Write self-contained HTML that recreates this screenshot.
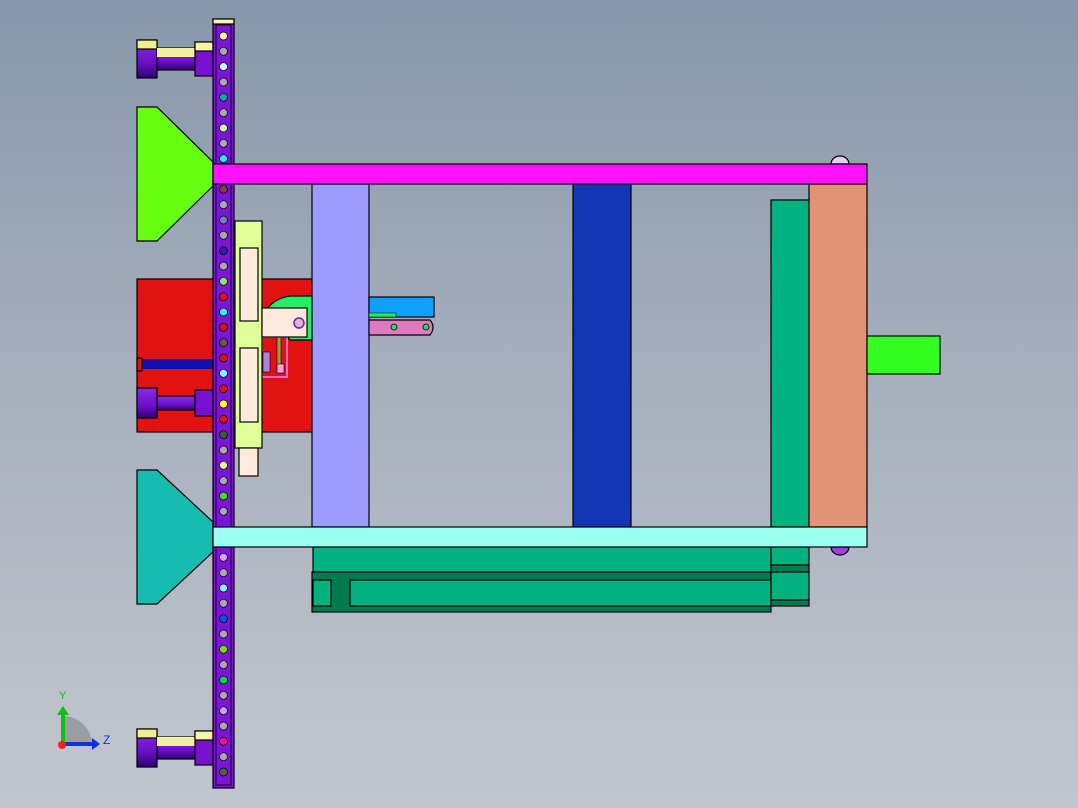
<!DOCTYPE html>
<html><head><meta charset="utf-8"><style>
html,body{margin:0;padding:0;width:1078px;height:808px;overflow:hidden}
body{background:linear-gradient(#8797ab,#a9b1be 50%,#c2c6ce)}
svg{position:absolute;left:0;top:0}
</style></head><body>
<svg width="1078" height="808" viewBox="0 0 1078 808" font-family="Liberation Sans, sans-serif">
<defs>
<linearGradient id="pv" x1="0" y1="0" x2="0" y2="1"><stop offset="0" stop-color="#8a2be2"/><stop offset="0.6" stop-color="#6a10c8"/><stop offset="1" stop-color="#300070"/></linearGradient>
</defs>
<g stroke="#000" stroke-width="1.2">
<rect x="137" y="279" width="175" height="153" fill="#e01212"/>
<rect x="137" y="359" width="76" height="10" fill="#1010b0" stroke="none"/>
<rect x="137" y="358" width="5" height="13" fill="#e01212"/>
<g>
<rect x="137" y="40" width="20" height="38" fill="url(#pv)"/><rect x="137" y="40" width="20" height="9" fill="#eef090"/>
<rect x="157" y="48" width="40" height="22" fill="url(#pv)"/><rect x="157" y="48" width="40" height="9" fill="#f0f0a0" stroke="none"/>
<rect x="195" y="42" width="18" height="34" fill="#7810d0"/><rect x="195" y="42" width="18" height="9" fill="#f8f4a8"/>
</g>
<g>
<rect x="137" y="388" width="20" height="30" fill="url(#pv)"/>
<rect x="157" y="396" width="38" height="14" fill="url(#pv)"/>
<rect x="195" y="390" width="18" height="26" fill="#7810d0"/>
</g>
<g>
<rect x="137" y="729" width="20" height="38" fill="url(#pv)"/><rect x="137" y="729" width="20" height="9" fill="#eef090"/>
<rect x="157" y="737" width="38" height="22" fill="url(#pv)"/><rect x="157" y="737" width="38" height="9" fill="#f0f0a0" stroke="none"/>
<rect x="195" y="731" width="18" height="34" fill="#7810d0"/><rect x="195" y="731" width="18" height="9" fill="#f8f4a8"/>
</g>
<polygon points="137,107 157,107 213,162 213,186 157,241 137,241" fill="#66ff11"/>
<polygon points="137,470 157,470 213,522 213,552 157,604 137,604" fill="#14bdb0"/>
<rect x="313" y="547" width="458" height="25" fill="#00b27f"/>
<rect x="771" y="547" width="38" height="18" fill="#00b27f"/>
<rect x="771" y="565" width="38" height="7" fill="#007a4e"/>
<rect x="312" y="572" width="459" height="40" fill="#007a4e"/>
<rect x="313" y="580" width="18" height="26" fill="#00b27f"/>
<rect x="350" y="580" width="421" height="26" fill="#00b27f"/>
<rect x="771" y="572" width="38" height="28" fill="#00b27f"/>
<rect x="771" y="600" width="38" height="6" fill="#007a4e"/>
<rect x="312" y="184" width="57" height="343" fill="#9c9cff"/>
<rect x="573" y="184" width="58" height="343" fill="#1237b5"/>
<rect x="771" y="200" width="38" height="327" fill="#00b27f"/>
<rect x="809" y="184" width="58" height="343" fill="#e29374"/>
<rect x="867" y="336" width="73" height="38" fill="#33ff22"/>
<path d="M831,164 A9,8 0 0 1 849,164 Z" fill="#e8c8ff"/>
<path d="M831,547 A9,8 0 0 0 849,547 Z" fill="#a040e0"/>
<!-- mechanism -->
<rect x="277" y="305" width="4" height="62" fill="#a0a040" stroke-width="0.6"/>
<path d="M266,310 Q275,298 290,296 L312,296 L312,340 L290,340 Z" fill="#22ee66"/>
<rect x="262" y="337" width="25" height="40" fill="none" stroke="#ff80ff" stroke-width="1.5"/>
<rect x="263" y="352" width="7" height="20" fill="#b080e0" stroke-width="0.6"/>
<rect x="277" y="364" width="7" height="9" fill="#ffa0e0" stroke-width="0.6"/>
<rect x="369" y="297" width="65" height="20" fill="#10a0ff"/>
<rect x="369" y="313" width="27" height="4" fill="#22ee55" stroke-width="0.5"/>
<path d="M369,320 L430,320 Q436,327 430,335 L369,335 Z" fill="#e07ac0"/>
<circle cx="394" cy="327" r="3" fill="#22dd66" stroke-width="0.8"/>
<circle cx="426" cy="327" r="3" fill="#22dd66" stroke-width="0.8"/>
<rect x="235" y="221" width="27" height="227" fill="#e0ff99"/>
<rect x="240" y="248" width="18" height="73" fill="#ffeadc"/>
<rect x="240" y="348" width="18" height="74" fill="#ffeadc"/>
<rect x="239" y="448" width="19" height="28" fill="#ffeadc"/>
<rect x="262" y="308" width="45" height="29" fill="#ffe8dc"/>
<circle cx="299" cy="323" r="5" fill="#e0b0e0" stroke="#802080" stroke-width="1.5"/>
<rect x="213" y="19" width="21" height="769" fill="#7b16d6"/>
<rect x="216" y="25" width="15" height="760" fill="none" stroke-width="0.8"/>
<rect x="213" y="19" width="21" height="5" fill="#f8f4a8"/>
</g>
<g stroke="#000" stroke-width="0.7">
<circle cx="223.5" cy="36" r="4" fill="#f8f0a0"/><circle cx="223.5" cy="51.3" r="4" fill="#a8a8b0"/><circle cx="223.5" cy="66.7" r="4" fill="#c8ffff"/><circle cx="223.5" cy="82" r="4" fill="#a8a8b0"/><circle cx="223.5" cy="97.3" r="4" fill="#10a0a0"/><circle cx="223.5" cy="112.7" r="4" fill="#a8a8b0"/><circle cx="223.5" cy="128" r="4" fill="#c8ffc8"/><circle cx="223.5" cy="143.3" r="4" fill="#a8a8b0"/><circle cx="223.5" cy="158.7" r="4" fill="#30e0ff"/>
<circle cx="223.5" cy="189.3" r="4" fill="#804040"/><circle cx="223.5" cy="204.7" r="4" fill="#a8a8b0"/><circle cx="223.5" cy="220" r="4" fill="#7080c0"/><circle cx="223.5" cy="235.3" r="4" fill="#a8a8b0"/><circle cx="223.5" cy="250.7" r="4" fill="#3020a0"/><circle cx="223.5" cy="266" r="4" fill="#a8a8b0"/>
<circle cx="223.5" cy="281.3" r="4" fill="#90e070"/><circle cx="223.5" cy="296.7" r="4" fill="#e01010"/><circle cx="223.5" cy="312" r="4" fill="#30f0f0"/><circle cx="223.5" cy="327.3" r="4" fill="#e01010"/><circle cx="223.5" cy="342.7" r="4" fill="#606040"/><circle cx="223.5" cy="358" r="4" fill="#e01010"/><circle cx="223.5" cy="373.3" r="4" fill="#80ffff"/><circle cx="223.5" cy="388.7" r="4" fill="#e01010"/><circle cx="223.5" cy="404" r="4" fill="#ffff10"/><circle cx="223.5" cy="419.3" r="4" fill="#e01010"/><circle cx="223.5" cy="434.7" r="4" fill="#306030"/>
<circle cx="223.5" cy="450" r="4" fill="#a8a8b0"/><circle cx="223.5" cy="465.3" r="4" fill="#e8ff90"/><circle cx="223.5" cy="480.7" r="4" fill="#a8a8b0"/><circle cx="223.5" cy="496" r="4" fill="#40e010"/><circle cx="223.5" cy="511.3" r="4" fill="#a8a8b0"/>
<circle cx="223.5" cy="557.3" r="4" fill="#e0a0f0"/><circle cx="223.5" cy="572.7" r="4" fill="#a8a8b0"/><circle cx="223.5" cy="588" r="4" fill="#90f0ff"/><circle cx="223.5" cy="603.3" r="4" fill="#a8a8b0"/><circle cx="223.5" cy="618.7" r="4" fill="#1050e0"/><circle cx="223.5" cy="634" r="4" fill="#a8a8b0"/><circle cx="223.5" cy="649.3" r="4" fill="#70e010"/><circle cx="223.5" cy="664.7" r="4" fill="#a8a8b0"/><circle cx="223.5" cy="680" r="4" fill="#10d040"/><circle cx="223.5" cy="695.3" r="4" fill="#a8a8b0"/><circle cx="223.5" cy="710.7" r="4" fill="#c0a0f0"/><circle cx="223.5" cy="726" r="4" fill="#a8a8b0"/><circle cx="223.5" cy="741.3" r="4" fill="#f01090"/><circle cx="223.5" cy="756.7" r="4" fill="#a8a8b0"/><circle cx="223.5" cy="772" r="4" fill="#506040"/>
</g>
<g stroke="#000" stroke-width="1.2">
<rect x="213" y="164" width="654" height="20" fill="#ff10ff"/>
<rect x="213" y="527" width="654" height="20" fill="#9cfff2"/>
</g>
<path d="M63,716 A29,29 0 0 1 92,745 L63,745 Z" fill="#999da6"/>
<rect x="61" y="714" width="4" height="31" fill="#10c010"/>
<polygon points="57,715 63,706 69,715" fill="#10c010"/>
<rect x="63" y="742" width="30" height="4" fill="#1030e0"/>
<polygon points="92,738 100,744 92,750" fill="#1030e0"/>
<circle cx="62" cy="745" r="4" fill="#ff2020"/>
<text x="59" y="699" font-size="11" fill="#10c010">Y</text>
<text x="103" y="744" font-size="12" fill="#1030e0">Z</text>
</svg>
</body></html>
